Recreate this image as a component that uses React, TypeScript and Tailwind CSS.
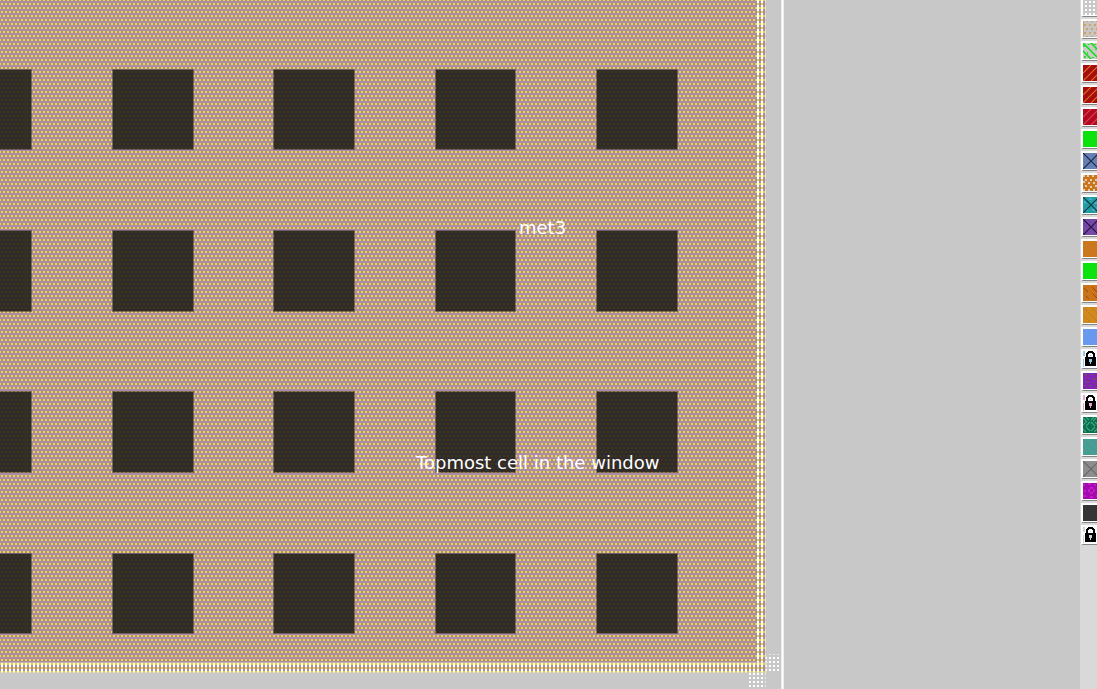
import type { ReactNode } from "react";

const columns = [
  { x: -49, width: 81 },
  { x: 112, width: 82 },
  { x: 273, width: 82 },
  { x: 435, width: 81 },
  { x: 596, width: 82 },
];
const rows = [
  { y: 69, height: 81 },
  { y: 230, height: 82 },
  { y: 391, height: 82 },
  { y: 553, height: 81 },
];
const stagger = "M1 3h2v2h-2zM0 7h1v1h-1zM3 7h1v1h-1zM0 0h1v1h-1zM3 0h1v1h-1z";

function LayoutCanvas() {
  return (
    <svg className="absolute inset-0 h-full w-full" shapeRendering="crispEdges" aria-hidden="true">
      <defs>
        <pattern id="metal" width="4" height="8" patternUnits="userSpaceOnUse">
          <rect width="4" height="8" fill="#ac8aae" />
          <path d={stagger} fill="#e8e020" />
        </pattern>
        <pattern id="cut" width="4" height="8" patternUnits="userSpaceOnUse">
          <rect width="4" height="8" fill="#302a2d" />
          <path d={stagger} fill="#3c3812" />
        </pattern>
        <pattern id="border" width="4" height="8" patternUnits="userSpaceOnUse">
          <rect width="4" height="8" fill="#ac8aae" />
          <rect x="1" width="2" height="8" fill="#fff" />
          <path d={stagger} fill="#e4d62c" />
        </pattern>
        <pattern id="stipple" x="1" y="1" width="4" height="4" patternUnits="userSpaceOnUse">
          <rect width="2" height="2" fill="#fff" />
        </pattern>
      </defs>
      <rect width="766" height="673" fill="url(#metal)" />
      <path d="M757 0H766V673H0V663H757Z" fill="url(#border)" />
      <path d="M0 662h766v1H0Z" fill="#d9cdb4" fillOpacity="0.6" />
      <path d="M765 0h1v673H0v-1H765Z" fill="#c8c8c8" fillOpacity="0.55" />
      {rows.map(({ y, height }) =>
        columns.map(({ x, width }) => (
          <g key={`${x}-${y}`}>
            <rect x={x} y={y} width={width} height={height} fill="#302a2b" fillOpacity="0.5" />
            <rect x={x + 1} y={y + 1} width={width - 2} height={height - 2} fill="url(#cut)" />
          </g>
        )),
      )}
      <rect x="766" y="655" width="15" height="17" fill="url(#stipple)" />
      <rect x="749" y="673" width="16" height="400" fill="url(#stipple)" />
      <path d="M769 654.5H781M765.5 673V2000" stroke="#e6e6e6" strokeDasharray="2 2" />
      <path d="M782.5 0V2000" stroke="#eeeeee" strokeWidth="3" />
      <path d="M782.5 0V2000" stroke="#fff" />
    </svg>
  );
}

type Layer = { name: string; color: string; art?: ReactNode };

const dots = (fill: string) => {
  const cells: ReactNode[] = [];
  for (let y = 0; y < 16; y += 4)
    for (let x = 0; x < 16; x += 4)
      cells.push(<rect key={`${x}-${y}`} x={x + 2} y={y + 2} width="2" height="2" fill={fill} />);
  return cells;
};

const cross = (color: string) => <path d="M0 0L16 16M16 0L0 16" stroke={color} strokeWidth="1.2" />;
const slashes = (color: string) => <path d="M0 8L8 0M0 16L16 0M8 16L16 8" stroke={color} strokeWidth="1.1" />;
const diagonals = (color: string, dash?: string, width = 1) => (
  <path d="M-1-1L17 17M7-1L17 9M-1 7L9 17" stroke={color} strokeWidth={width} strokeDasharray={dash} />
);
const lock = (tint: string) => (
  <>
    <path d="M0 0H2V5H0ZM14 0H16V5H14ZM0 8H1V16H0ZM14 8H16V16H14Z" fill={tint} />
    <path d="M3 6V2H4V1H5V0H10V1H11V2H12V6H10V3H9V2H6V3H5V6Z" fill="#000" />
    <path d="M2 6H13V15H2Z" fill="#000" />
    <path d="M6 8H9V11H8V13H7V11H6Z" fill={tint} />
    <path d="M7 4H8V5H7Z" fill={tint} />
  </>
);

const layers: Layer[] = [
  { name: "Layer 1", color: "bg-[#c8c8c8]", art: dots("#fff") },
  {
    name: "Layer 2",
    color: "bg-[#c8c6c4]",
    art: <path d="M3 0h2v1h-2zM8 0h2v1h-2zM13 0h2v1h-2zM1 3h2v2h-2zM6 3h2v2h-2zM11 3h2v2h-2zM3 7h2v2h-2zM8 7h2v2h-2zM13 7h2v2h-2zM1 11h2v2h-2zM6 11h2v2h-2zM11 11h2v2h-2zM3 15h2v1h-2zM8 15h2v1h-2zM0 0h1v16h-1z" fill="#d0a06c" />,
  },
  {
    name: "Layer 3",
    color: "bg-[#c8ccc8]",
    art: (
      <>
        {diagonals("#12dc12", undefined, 1.5)}
        <path d="M0 2h2v2h-2zM5 1h2v1h-2zM11 1h2v1h-2zM4 9h1v2h-1zM12 6h2v1h-2zM1 13h2v2h-2zM9 14h2v1h-2z" fill="#27e427" />
      </>
    ),
  },
  { name: "Layer 4", color: "bg-[#a80c0c]", art: slashes("#d47822") },
  { name: "Layer 5", color: "bg-[#a80c0c]", art: slashes("#d47822") },
  { name: "Layer 6", color: "bg-[#b50825]", art: slashes("#d14b45") },
  { name: "Layer 7", color: "bg-[#0ce20c]" },
  { name: "Layer 8", color: "bg-[#6680b4]", art: cross("#182342") },
  {
    name: "Layer 9",
    color: "bg-[#cc761c]",
    art: <path d="M0 0h2v2h-2zM4 0h2v2h-2zM9 0h2v2h-2zM14 0h2v2h-2zM2 4h2v2h-2zM7 4h2v2h-2zM12 4h2v2h-2zM0 6h2v2h-2zM5 7h2v2h-2zM10 7h2v2h-2zM2 10h2v2h-2zM7 11h2v2h-2zM12 10h2v2h-2zM0 14h2v2h-2zM5 14h2v2h-2zM10 14h2v2h-2z" fill="#dccdbd" />,
  },
  {
    name: "Layer 10",
    color: "bg-[#219d9d]",
    art: (
      <>
        <path d="M1 4h2v3h-2zM6 1h3v2h-3zM11 5h3v2h-3zM3 11h2v3h-2zM9 12h3v2h-3zM13 10h2v2h-2z" fill="#45a7dc" />
        {cross("#093643")}
      </>
    ),
  },
  { name: "Layer 11", color: "bg-[#7348a6]", art: cross("#211035") },
  { name: "Layer 12", color: "bg-[#ca771f]" },
  { name: "Layer 13", color: "bg-[#0ce20c]" },
  {
    name: "Layer 14",
    color: "bg-[#ca731b]",
    art: <path d="M1 3L5 7M9 2L14 7M3 11L6 14M10 9L15 14" stroke="#8f4a12" strokeWidth="1" />,
  },
  { name: "Layer 15", color: "bg-[#d18a1b]", art: diagonals("#b07a2c", "3 1") },
  { name: "Layer 16", color: "bg-[#6899ef]" },
  { name: "Layer 17", color: "bg-white", art: lock("#90cce5") },
  {
    name: "Layer 18",
    color: "bg-[#8520b8]",
    art: (
      <path
        d="M1 1H4V3H1ZM7 1H11V2H7ZM14 1H16V3H14ZM4 4H7V5H4ZM0 6H2V7H0ZM9 5H13V7H9ZM2 8H6V10H2ZM8 9H10V10H8ZM12 10H15V11H12ZM0 12H3V13H0ZM6 12H9V14H6ZM11 14H14V15H11ZM3 15H5V16H3Z"
        fill="#6b4878"
      />
    ),
  },
  { name: "Layer 19", color: "bg-white", art: lock("#e6a5d0") },
  {
    name: "Layer 20",
    color: "bg-[#087048]",
    art: (
      <path
        d="M0 1L3 4M3 0L6 3M8 3L11 0M10 4L14 0M0 8L4 4M3 9L7 5M8 5L12 9M12 5L16 9M0 12L3 15M3 10L7 14M8 14L12 10M11 15L15 11"
        stroke="#40a58f"
        strokeWidth="1.1"
      />
    ),
  },
  { name: "Layer 21", color: "bg-[#449f98]", art: diagonals("#6b8766", "2 1") },
  { name: "Layer 22", color: "bg-[#8d8d8d]", art: cross("#666666") },
  {
    name: "Layer 23",
    color: "bg-[#a408b0]",
    art: <path d="M0 1h2v2h-2zM5 0h3v2h-3zM11 1h2v2h-2zM7 4h3v2h-3zM5 6h2v3h-2zM10 6h2v3h-2zM7 9h3v2h-3zM1 7h2v2h-2zM0 12h3v2h-3zM13 12h2v2h-2zM14 5h2v2h-2zM7 13h3v2h-3z" fill="#c41cbe" />,
  },
  { name: "Layer 24", color: "bg-[#353535]" },
  { name: "Layer 25", color: "bg-white", art: lock("#d7cfc9") },
];

function LayerButton({ layer }: { layer: Layer }) {
  return (
    <button
      type="button"
      aria-label={layer.name}
      className="h-5 w-5 shrink-0 border-2 border-b border-white border-b-[#858585] bg-white"
    >
      <svg viewBox="0 0 16 16" className={`mb-px block h-4 w-4 ${layer.color}`} aria-hidden="true">
        {layer.art}
      </svg>
    </button>
  );
}

export default function App() {
  return (
    <div className="flex h-screen overflow-hidden bg-[#c8c8c8] font-['DejaVu_Sans',sans-serif]">
      <main className="relative min-w-0 flex-1 overflow-hidden">
        <LayoutCanvas />
        <span className="absolute left-[519px] top-[218px] text-lg leading-5 whitespace-nowrap text-white">met3</span>
        <span className="absolute left-[416px] top-[453px] text-lg leading-5 whitespace-nowrap text-white">
          Topmost cell in the window
        </span>
      </main>
      <aside className="w-[17px] shrink-0 overflow-hidden bg-[#d9d9d9] pl-px">
        <div className="-mt-[3px] flex flex-col gap-0.5">
          {layers.map((layer) => (
            <LayerButton key={layer.name} layer={layer} />
          ))}
        </div>
      </aside>
    </div>
  );
}
